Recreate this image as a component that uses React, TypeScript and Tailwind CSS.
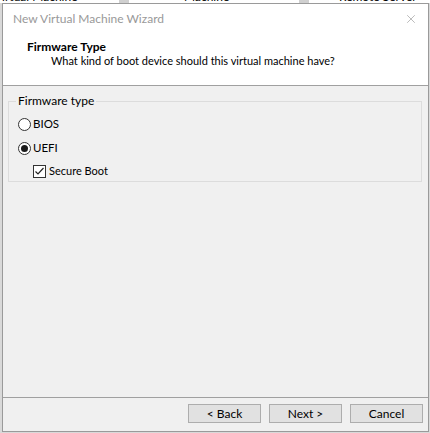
import { X } from 'lucide-react';

const font = { fontFamily: 'Lato, "Noto Sans", sans-serif' };

const BehindStrip = () => (
  <div className="h-[3px] overflow-hidden bg-white flex text-[12px] leading-[12px] text-black">
    <div className="w-[125px] shrink-0 -mt-[9px] -ml-[6px]">Virtual Machine</div>
    <div className="w-[10px] shrink-0 bg-[#d0d0d0]" />
    <div className="w-[170px] shrink-0 -mt-[9px] pl-[55px]">Machine</div>
    <div className="w-[10px] shrink-0 bg-[#d0d0d0]" />
    <div className="flex-1 -mt-[9px] pl-[30px]">Remote Server</div>
  </div>
);

const Radio = ({ checked, label }: { checked: boolean; label: string }) => (
  <div className="flex items-center h-[14px]">
    <span className="w-[13px] h-[13px] rounded-full border border-[#333] bg-white flex items-center justify-center shrink-0">
      {checked && <span className="w-[7px] h-[7px] rounded-full bg-[#1a1a1a]" />}
    </span>
    <span className="ml-[2px] text-[11.5px] leading-[14px] text-black">{label}</span>
  </div>
);

const Button = ({ label }: { label: string }) => (
  <div className="w-[73px] h-[19px] border border-[#adadad] bg-[#e1e1e1] flex items-center justify-center text-[12px] text-black">
    {label}
  </div>
);

export default function App() {
  return (
    <div className="w-[430px] h-[433px] bg-[#d9d9d9] overflow-hidden" style={font}>
      <BehindStrip />
      <div className="ml-[2px] w-[427px] h-[429px] border border-[#9a9a9a] flex flex-col bg-[#f0f0f0]">
        <div className="h-[30px] bg-white flex items-center justify-between pl-[10px] pr-[10px] shrink-0">
          <span className="text-[12px] text-[#999999]">New Virtual Machine Wizard</span>
          <X size={14} strokeWidth={1} className="text-[#8a8a8a]" />
        </div>
        <div className="h-[51px] bg-white pl-[24px] pt-[6px] shrink-0">
          <div className="text-[12px] font-bold text-black leading-[14px]">Firmware Type</div>
          <div className="text-[11px] text-black leading-[14px] pl-[24px]">What kind of boot device should this virtual machine have?</div>
        </div>
        <div className="h-px bg-[#a0a0a0] shrink-0" />
        <div className="flex-1 px-[5px] pt-[15px]">
          <div className="relative border border-[#dcdcdc] h-[81px] w-[414px] pl-[9px] pt-[15px]">
            <span className="absolute -top-[8px] left-[7px] px-[2px] bg-[#f0f0f0] text-[12px] text-black leading-[14px]">
              Firmware type
            </span>
            <div className="flex flex-col gap-[10px]">
              <Radio checked={false} label="BIOS" />
              <Radio checked label="UEFI" />
            </div>
            <div className="flex items-center h-[14px] ml-[15px] mt-[9px]">
              <span className="w-[13px] h-[13px] border border-[#333] bg-white flex items-center justify-center shrink-0">
                <svg width="11" height="11" viewBox="0 0 11 11">
                  <path d="M1.5 5.5 L4 8 L9.5 2" fill="none" stroke="#222" strokeWidth="1.2" />
                </svg>
              </span>
              <span className="ml-[3px] text-[11px] leading-[14px] text-black">Secure Boot</span>
            </div>
          </div>
        </div>
        <div className="h-px bg-[#a0a0a0] shrink-0" />
        <div className="h-[33px] flex items-start justify-end gap-[8px] pr-[5px] pt-[6px] shrink-0">
          <Button label="< Back" />
          <Button label="Next >" />
          <Button label="Cancel" />
        </div>
      </div>
    </div>
  );
}
